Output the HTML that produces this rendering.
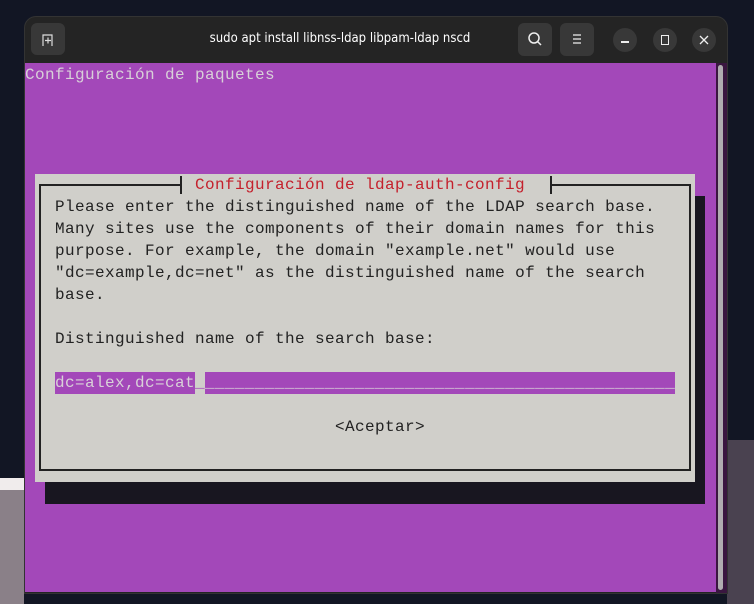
<!DOCTYPE html>
<html><head><meta charset="utf-8"><style>
*{margin:0;padding:0;box-sizing:border-box}
body{width:754px;height:604px;overflow:hidden;background:#121624;position:relative;font-family:"Liberation Sans",sans-serif}
.abs{position:absolute}
.mono{font-family:"Liberation Mono",monospace;font-size:16px;letter-spacing:0.4px;line-height:22px;white-space:pre}
</style></head><body>
<div class="abs" style="left:0;top:478px;width:24px;height:126px;background:#8a8088"></div>
<div class="abs" style="left:0;top:478px;width:24px;height:12px;background:#f0ecec"></div>
<div class="abs" style="left:727px;top:440px;width:27px;height:164px;background:#4a4250"></div>
<div class="abs" style="left:24px;top:16px;width:704px;height:578px;border-radius:12px 12px 0 0;background:#242424;border:1px solid #333"></div>
<div class="abs" style="left:31px;top:23px;width:34px;height:32px;background:#383838;border-radius:6px"></div>
<svg class="abs" style="left:41px;top:33px" width="14" height="14" viewBox="0 0 14 14"><path d="M2 13V2h9v11M4 7.5h6M7 4.5v6" stroke="#ddd" stroke-width="1.2" fill="none"/></svg>
<div class="abs" style="left:160px;top:31px;width:360px;text-align:center;color:#fff;font-size:13px;font-family:'DejaVu Sans Condensed','Liberation Sans',sans-serif">sudo apt install libnss-ldap libpam-ldap nscd</div>
<div class="abs" style="left:518px;top:23px;width:34px;height:33px;background:#383838;border-radius:6px"></div>
<svg class="abs" style="left:527px;top:31px" width="16" height="16" viewBox="0 0 16 16"><circle cx="7" cy="7" r="5" stroke="#eee" stroke-width="1.5" fill="none"/><path d="M10.5 10.5L14 14" stroke="#eee" stroke-width="1.5"/></svg>
<div class="abs" style="left:560px;top:23px;width:34px;height:33px;background:#383838;border-radius:6px"></div>
<svg class="abs" style="left:570px;top:32px" width="14" height="14" viewBox="0 0 14 14"><path d="M3 3h8M3 7h8M3 11h8" stroke="#eee" stroke-width="1.3"/></svg>
<div class="abs" style="left:613px;top:28px;width:24px;height:24px;border-radius:50%;background:#383838"></div>
<div class="abs" style="left:621px;top:41px;width:8px;height:1.5px;background:#eee"></div>
<div class="abs" style="left:653px;top:28px;width:24px;height:24px;border-radius:50%;background:#383838"></div>
<div class="abs" style="left:661px;top:35px;width:8px;height:10px;border:1.3px solid #eee"></div>
<div class="abs" style="left:692px;top:28px;width:24px;height:24px;border-radius:50%;background:#383838"></div>
<svg class="abs" style="left:698px;top:34px" width="12" height="12" viewBox="0 0 12 12"><path d="M2 2l8 8M10 2l-8 8" stroke="#eee" stroke-width="1.3"/></svg>
<div class="abs" style="left:25px;top:63px;width:691px;height:529px;background:#a348b9"></div>
<div class="abs" style="left:716px;top:63px;width:11px;height:530px;background:#3a1640"></div>
<div class="abs" style="left:718px;top:65px;width:5px;height:525px;background:#b0acb0;border-radius:3px"></div>
<div class="abs mono" style="left:25px;top:64px;color:#d8d0d8">Configuración de paquetes</div>
<div class="abs" style="left:45px;top:196px;width:660px;height:308px;background:#181620"></div>
<div class="abs" style="left:35px;top:174px;width:660px;height:308px;background:#d0cfca"></div>
<div class="abs" style="left:39px;top:184px;width:652px;height:287px;border:2px solid #222;border-top:none"></div>
<div class="abs" style="left:39px;top:184px;width:142px;height:2px;background:#222"></div>
<div class="abs" style="left:180px;top:176px;width:2px;height:18px;background:#222"></div>
<div class="abs" style="left:550px;top:184px;width:141px;height:2px;background:#222"></div>
<div class="abs" style="left:550px;top:176px;width:2px;height:18px;background:#222"></div>
<div class="abs mono" style="left:195px;top:174px;color:#c4202c">Configuración de ldap-auth-config</div>
<div class="abs mono" style="left:55px;top:196px;color:#222">Please enter the distinguished name of the LDAP search base.
Many sites use the components of their domain names for this
purpose. For example, the domain "example.net" would use
"dc=example,dc=net" as the distinguished name of the search
base.

Distinguished name of the search base:</div>
<div class="abs" style="left:55px;top:372px;width:140px;height:22px;background:#a348b9"></div>
<div class="abs" style="left:205px;top:372px;width:470px;height:22px;background:#a348b9"></div>
<div class="abs mono" style="left:55px;top:372px;color:#d8d0d8">dc=alex,dc=cat________________________________________________</div>
<div class="abs mono" style="left:195px;top:372px;color:#a348b9">_</div>
<div class="abs mono" style="left:335px;top:416px;color:#222">&lt;Aceptar&gt;</div>
</body></html>
